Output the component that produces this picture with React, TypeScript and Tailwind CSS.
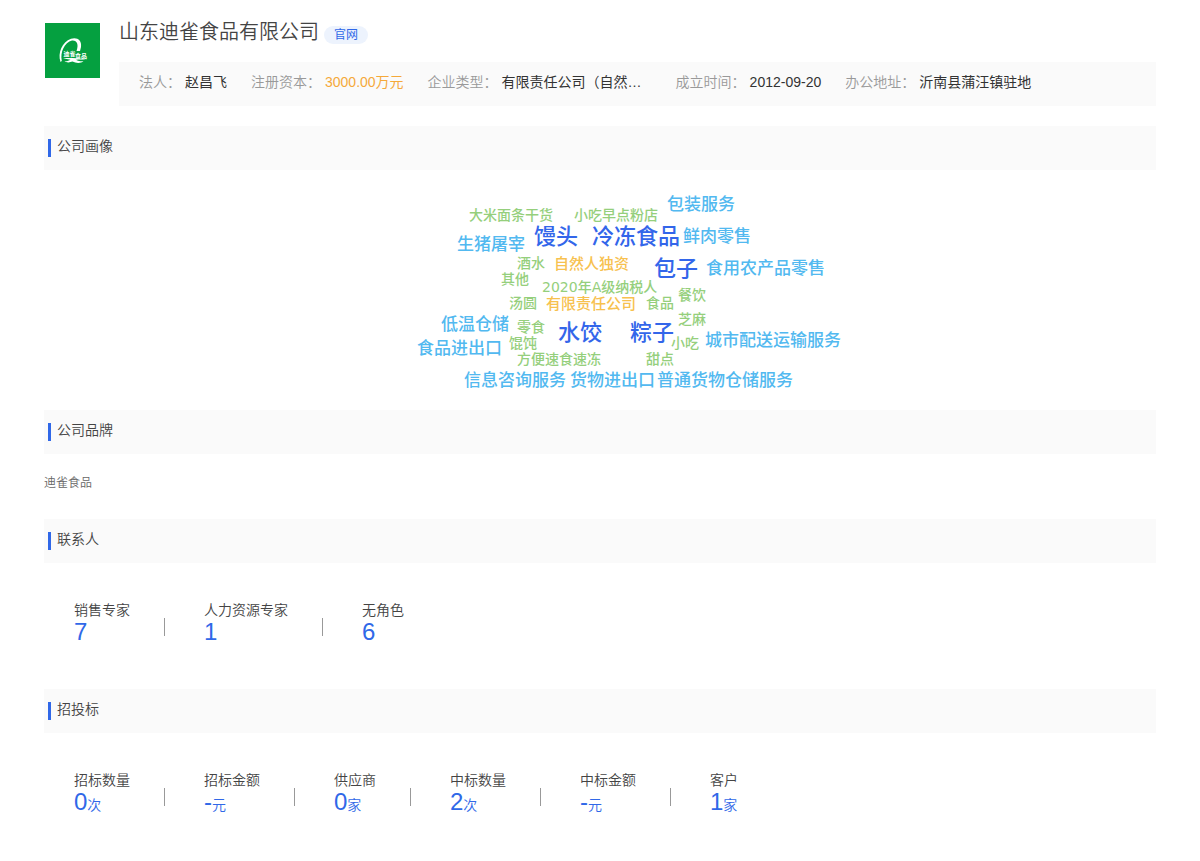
import { ReactNode } from 'react';

type Stat = { label: string; value: string; unit?: string };

const contacts: Stat[] = [
  { label: '销售专家', value: '7' },
  { label: '人力资源专家', value: '1' },
  { label: '无角色', value: '6' },
];

const bids: Stat[] = [
  { label: '招标数量', value: '0', unit: '次' },
  { label: '招标金额', value: '-', unit: '元' },
  { label: '供应商', value: '0', unit: '家' },
  { label: '中标数量', value: '2', unit: '次' },
  { label: '中标金额', value: '-', unit: '元' },
  { label: '客户', value: '1', unit: '家' },
];

const wordStyles = {
  product: 'text-[22px] text-[#3366ea]',
  service: 'text-[17px] text-[#52b9f0]',
  nature: 'text-[15px] text-[#f7c14f]',
  tag: 'text-[14px] text-[#95cf7c]',
};

const words: { text: string; kind: keyof typeof wordStyles; place: string }[] = [
  { text: '馒头', kind: 'product', place: 'left-[174px] top-[56px]' },
  { text: '冷冻食品', kind: 'product', place: 'left-[232px] top-[56px]' },
  { text: '包子', kind: 'product', place: 'left-[294px] top-[88px]' },
  { text: '水饺', kind: 'product', place: 'left-[198px] top-[152px]' },
  { text: '粽子', kind: 'product', place: 'left-[270px] top-[152px]' },
  { text: '包装服务', kind: 'service', place: 'left-[307px] top-[26px]' },
  { text: '鲜肉零售', kind: 'service', place: 'left-[323px] top-[58px]' },
  { text: '生猪屠宰', kind: 'service', place: 'left-[97px] top-[66px]' },
  { text: '食用农产品零售', kind: 'service', place: 'left-[346px] top-[90px]' },
  { text: '低温仓储', kind: 'service', place: 'left-[81px] top-[146px]' },
  { text: '食品进出口', kind: 'service', place: 'left-[57px] top-[170px]' },
  { text: '城市配送运输服务', kind: 'service', place: 'left-[345px] top-[162px]' },
  { text: '信息咨询服务', kind: 'service', place: 'left-[104px] top-[202px]' },
  { text: '货物进出口', kind: 'service', place: 'left-[210px] top-[202px]' },
  { text: '普通货物仓储服务', kind: 'service', place: 'left-[297px] top-[202px]' },
  { text: '自然人独资', kind: 'nature', place: 'left-[194px] top-[87px]' },
  { text: '有限责任公司', kind: 'nature', place: 'left-[186px] top-[127px]' },
  { text: '大米面条干货', kind: 'tag', place: 'left-[109px] top-[38px]' },
  { text: '小吃早点粉店', kind: 'tag', place: 'left-[214px] top-[38px]' },
  { text: '酒水', kind: 'tag', place: 'left-[157px] top-[86px]' },
  { text: '其他', kind: 'tag', place: 'left-[141px] top-[102px]' },
  { text: '2020年A级纳税人', kind: 'tag', place: 'left-[182px] top-[110px]' },
  { text: '汤圆', kind: 'tag', place: 'left-[149px] top-[126px]' },
  { text: '食品', kind: 'tag', place: 'left-[286px] top-[126px]' },
  { text: '餐饮', kind: 'tag', place: 'left-[318px] top-[118px]' },
  { text: '芝麻', kind: 'tag', place: 'left-[318px] top-[142px]' },
  { text: '零食', kind: 'tag', place: 'left-[157px] top-[150px]' },
  { text: '馄饨', kind: 'tag', place: 'left-[149px] top-[166px]' },
  { text: '小吃', kind: 'tag', place: 'left-[311px] top-[166px]' },
  { text: '方便速食速冻', kind: 'tag', place: 'left-[157px] top-[182px]' },
  { text: '甜点', kind: 'tag', place: 'left-[286px] top-[182px]' },
];

const Logo = () => (
  <svg viewBox="0 0 55 55" className="block size-[55px]" role="img" aria-label="迪雀食品">
    <rect width="55" height="55" fill="#05a040" />
    <path
      d="M15.500 39C12.500 30 17 19 26 15.800C32 14 37 17 36 24L35 28H31.500C34 21.500 32 17 27 17.500C19.500 19.500 15 29 16.800 38Z"
      fill="#fff"
    />
    <path
      d="M18 35.200C24 34.600 31 35 40.500 36.200C36 36.400 33 36.500 31 36.700C33 38 36 38.500 38.500 38.300C36 40.600 31 40.500 27.500 38.600C24.500 39.800 21 39.600 19.500 38.300C22 38.500 24 37.800 25.500 36.800C23 36.200 20.500 35.800 18 35.200Z"
      fill="#fff"
    />
    <g fill="#fff" fontWeight="700" fontSize="6">
      <text x="18.500" y="33">迪雀</text>
      <text x="30" y="34.500">食品</text>
    </g>
  </svg>
);

const InfoItem = ({ label, children }: { label: string; children: ReactNode }) => (
  <div className="flex gap-1 whitespace-nowrap">
    <dt className="font-[350] text-[#999]">{label}：</dt>
    {children}
  </div>
);

const Section = ({ title, children }: { title: string; children: ReactNode }) => (
  <section>
    <div className="flex h-11 items-center gap-1.5 bg-[#fafafa] px-1">
      <span className="h-[18px] w-[3px] bg-[#3068e8]" />
      <h2 className="pb-1 text-sm font-[350] text-[#444]">{title}</h2>
    </div>
    {children}
  </section>
);

const StatList = ({ stats }: { stats: Stat[] }) => (
  <dl className="flex flex-wrap px-[30px] pt-9">
    {stats.map((stat, i) => (
      <div key={stat.label} className="flex items-end">
        {i > 0 && <span className="mr-[39px] mb-[9px] ml-[34px] h-[18px] w-px bg-[#999]" />}
        <div>
          <dt className="text-sm leading-[22px] font-[350] text-[#444]">{stat.label}</dt>
          <dd className="pb-0.5 text-2xl leading-[22px] text-[#3068e8]">
            {stat.value}
            {stat.unit && <span className="text-sm leading-none font-[350]">{stat.unit}</span>}
          </dd>
        </div>
      </div>
    ))}
  </dl>
);

const App = () => {
  return (
    <main className="min-h-screen bg-white px-11 pt-4 pb-10 font-['Liberation_Sans','Noto_Sans_CJK_SC',sans-serif]">
      <header className="mb-5 flex items-start gap-[18px]">
        <div className="mt-1.5 shrink-0 border border-white">
          <Logo />
        </div>
        <div className="min-w-0 flex-1">
          <div className="flex h-[30px] items-center gap-[5px]">
            <h1 className="pt-0.5 text-xl font-[350] text-[#444]">山东迪雀食品有限公司</h1>
            <a href="#" className="mt-2 rounded-full bg-[#edf3fd] px-2.5 text-xs leading-[18px] text-[#3068e8]">
              官网
            </a>
          </div>
          <dl className="mt-4 flex min-h-11 flex-wrap items-center gap-x-6 bg-[#fafafa] px-5 pb-1 text-sm text-[#333]">
            <InfoItem label="法人">
              <dd>赵昌飞</dd>
            </InfoItem>
            <InfoItem label="注册资本">
              <dd className="text-[#f5a93a]">3000.00万元</dd>
            </InfoItem>
            <InfoItem label="企业类型">
              <dd className="w-[150px]">有限责任公司（自然…</dd>
            </InfoItem>
            <InfoItem label="成立时间">
              <dd>2012-09-20</dd>
            </InfoItem>
            <InfoItem label="办公地址">
              <dd>沂南县蒲汪镇驻地</dd>
            </InfoItem>
          </dl>
        </div>
      </header>

      <Section title="公司画像">
        <div className="relative mx-auto h-60 w-[480px] font-['DejaVu_Sans','Noto_Sans_CJK_SC',sans-serif] font-medium">
          {words.map((word) => (
            <span
              key={word.text}
              className={`absolute leading-none whitespace-nowrap ${wordStyles[word.kind]} ${word.place}`}
            >
              {word.text}
            </span>
          ))}
        </div>
      </Section>

      <Section title="公司品牌">
        <p className="pt-[18px] pb-[25px] text-xs leading-[22px] font-[350] text-[#666]">迪雀食品</p>
      </Section>

      <Section title="联系人">
        <div className="pb-11">
          <StatList stats={contacts} />
        </div>
      </Section>

      <Section title="招投标">
        <StatList stats={bids} />
      </Section>
    </main>
  );
};

export default App;
